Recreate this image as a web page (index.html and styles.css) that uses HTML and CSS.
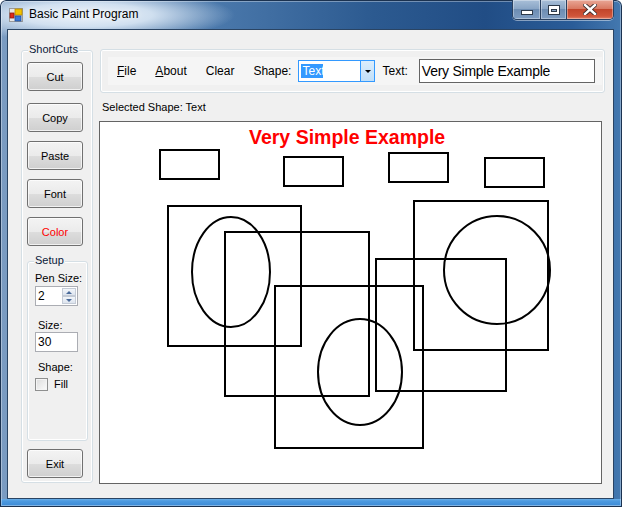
FILE: index.html
```html
<!DOCTYPE html>
<html>
<head>
<meta charset="utf-8">
<title>Basic Paint Program</title>
<link rel="stylesheet" href="styles.css">
</head>
<body>
<div class="window">
  <div class="titlebar">
    <svg class="app-icon" width="14" height="14" viewBox="0 0 14 14">
      <rect x="0.5" y="0.5" width="13" height="13" fill="#e8e8e8" stroke="#9a9a9a"/>
      <line x1="0.5" y1="7" x2="13.5" y2="7" stroke="#b0b0b0"/>
      <line x1="7" y1="0.5" x2="7" y2="13.5" stroke="#b0b0b0"/>
      <rect x="6" y="1" width="7" height="6" fill="#f2c200" stroke="#b88a00" stroke-width="0.8"/>
      <rect x="1" y="5" width="4" height="5" fill="#e02a1a" stroke="#8a1a10" stroke-width="0.8"/>
      <rect x="6" y="8" width="6" height="5" fill="#3a78d8" stroke="#1f4f9a" stroke-width="0.8"/>
    </svg>
    <span class="title">Basic Paint Program</span>
    <div class="caption-btns">
      <div class="cb cb-min"><span class="glyph-min"></span></div>
      <div class="cb cb-max"><span class="glyph-max"></span></div>
      <div class="cb cb-close">
        <svg width="14" height="11" viewBox="0 0 14 11">
          <path d="M2 1 L12 10 M12 1 L2 10" stroke="#3a2a2a" stroke-width="4.2" stroke-linecap="square"/>
          <path d="M2 1 L12 10 M12 1 L2 10" stroke="#ffffff" stroke-width="2.4" stroke-linecap="square"/>
        </svg>
      </div>
    </div>
  </div>
  <div class="client">
    <div class="left">
      <div class="group shortcuts">
        <span class="group-caption">ShortCuts</span>
        <button class="btn btn-first">Cut</button>
        <button class="btn">Copy</button>
        <button class="btn">Paste</button>
        <button class="btn">Font</button>
        <button class="btn btn-red">Color</button>
        <div class="group setup">
          <span class="group-caption">Setup</span>
          <div class="lbl">Pen Size:</div>
          <div class="updown">
            <span class="updown-val">2</span>
            <div class="spin">
              <div class="spin-btn"><span class="arr-up"></span></div>
              <div class="spin-btn"><span class="arr-down"></span></div>
            </div>
          </div>
          <div class="lbl lbl-indent lbl-size">Size:</div>
          <div class="textbox small">30</div>
          <div class="lbl lbl-indent lbl-shape">Shape:</div>
          <div class="check"><span class="check-box"></span><span>Fill</span></div>
        </div>
        <button class="btn btn-exit">Exit</button>
      </div>
    </div>
    <div class="right">
      <div class="group toolbar">
        <div class="strip">
          <span class="menu"><u>F</u>ile</span>
          <span class="menu"><u>A</u>bout</span>
          <span class="menu">Clear</span>
          <span class="menu">Shape:</span>
          <div class="combo">
            <span class="combo-sel">Text</span>
            <span class="combo-drop"><span class="arr-down dark"></span></span>
          </div>
          <span class="menu text-lbl">Text:</span>
          <div class="textbox big">Very Simple Example</div>
        </div>
      </div>
      <div class="status">Selected Shape: Text</div>
      <div class="canvas">
        <svg width="501" height="361" viewBox="0 0 501 361">
          <g fill="none" stroke="#000" stroke-width="2">
            <rect x="60" y="28" width="59" height="29"/>
            <rect x="184" y="35" width="59" height="29"/>
            <rect x="289" y="31" width="59" height="29"/>
            <rect x="385" y="36" width="59" height="29"/>
            <rect x="68" y="84" width="133" height="140"/>
            <ellipse cx="131" cy="150" rx="39" ry="55"/>
            <rect x="125" y="110" width="144" height="164"/>
            <rect x="175" y="164" width="148" height="162"/>
            <ellipse cx="260" cy="250" rx="42" ry="53"/>
            <rect x="276" y="137" width="130" height="132"/>
            <rect x="314" y="79" width="134" height="149"/>
            <ellipse cx="397" cy="148" rx="53" ry="54"/>
          </g>
          <text x="149" y="22" class="canvas-text">Very Simple Example</text>
        </svg>
      </div>
    </div>
  </div>
</div>
</body>
</html>
```
FILE: styles.css
```css
* { box-sizing: border-box; }
html, body { margin: 0; padding: 0; }
body {
  width: 622px;
  height: 507px;
  overflow: hidden;
  background: #ffffff;
  font-family: "Liberation Sans", Arial, sans-serif;
}
.window {
  width: 622px;
  height: 507px;
  border-radius: 6px 6px 0 0;
  background:
    linear-gradient(to top, #1c3d63 0, #1c3d63 1px, #3c8ad5 1px, #4d9ae0 6px, #6aaee6 8px, transparent 8px),
    radial-gradient(ellipse 150px 26px at 85px 15px, rgba(238,244,250,1) 0%, rgba(220,233,246,0.9) 45%, rgba(200,220,240,0) 100%),
    linear-gradient(to right, #7b9cc2 0%, #6b90ba 12%, #4a78ab 35%, #2c5a90 60%, #214d85 78%, #2a5c98 92%, #4479b0 100%);
  box-shadow: inset 0 0 0 1px #1b3250, inset 0 0 0 2px rgba(255,255,255,0.35);
  display: flex;
  flex-direction: column;
}
.titlebar {
  height: 29px;
  display: flex;
  align-items: flex-start;
}
.app-icon {
  margin: 8px 0 0 9px;
  flex: none;
}
.title {
  margin: 7px 0 0 6px;
  font-size: 12px;
  line-height: 15px;
  color: #000;
  text-shadow: 0 0 6px rgba(255,255,255,0.9);
}
.caption-btns {
  margin-left: auto;
  margin-right: 8px;
  display: flex;
  height: 20px;
  border: 1px solid #2a4160;
  border-top: none;
  border-radius: 0 0 5px 5px;
  overflow: hidden;
  box-shadow: 0 1px 0 rgba(255,255,255,0.45);
}
.cb {
  height: 19px;
  display: flex;
  align-items: center;
  justify-content: center;
  background: linear-gradient(#a8bfd8 0%, #8aa6c6 45%, #6d8db3 50%, #7e9dc2 100%);
  box-shadow: inset 0 0 0 1px rgba(255,255,255,0.35);
}
.cb-min { width: 28px; border-right: 1px solid #2a4160; }
.cb-max { width: 26px; border-right: 1px solid #2a4160; }
.cb-close {
  width: 46px;
  background: linear-gradient(#e9a796 0%, #d97a63 45%, #c2452b 50%, #d0553a 85%, #e1826a 100%);
}
.glyph-min {
  width: 12px;
  height: 5px;
  margin-top: 6px;
  background: #fff;
  border: 1px solid #2d3a4a;
}
.glyph-max {
  width: 12px;
  height: 10px;
  border: 1px solid #2d3a4a;
  background: #fff;
  box-shadow: inset 0 0 0 1px #fff;
  position: relative;
}
.glyph-max::after {
  content: "";
  position: absolute;
  left: 2px; top: 3px; right: 2px; bottom: 2px;
  border: 1px solid #2d3a4a;
  background: #8aa6c6;
}
.client {
  margin-left: 7px;
  width: 607px;
  height: 470px;
  border: 1px solid #2a4463;
  background: #f0f0f0;
  display: flex;
  font-size: 11px;
  color: #000;
}
.left {
  padding: 20px 0 0 13px;
  width: 85px;
  flex: none;
}
.group {
  position: relative;
  border: 1px solid #d5dfe5;
  border-radius: 3px;
  box-shadow: inset 0 0 0 1px #ffffff;
}
.group-caption {
  position: absolute;
  left: 6px;
  top: -8px;
  padding: 0 1px;
  line-height: 13px;
  background: #f0f0f0;
  color: #0b1a3a;
}
.shortcuts {
  width: 72px;
  height: 433px;
  padding: 11px 0 0 5px;
}
.btn {
  display: flex;
  align-items: center;
  justify-content: center;
  width: 56px;
  height: 29px;
  margin: 9px 0 0 0;
  padding: 0;
  border: 1px solid #707070;
  border-radius: 3px;
  background: linear-gradient(#f3f3f3 0%, #ebebeb 50%, #dddddd 51%, #cfcfcf 100%);
  box-shadow: inset 0 0 0 1px rgba(255,255,255,0.7);
  font-family: "Liberation Sans", Arial, sans-serif;
  font-size: 11px;
  color: #000;
}
.btn-first { margin-top: 0; }
.btn + .btn:nth-of-type(2) { margin-top: 12px; }
.btn-red { color: #ff0000; }
.setup {
  margin-top: 15px;
  width: 61px;
  height: 180px;
  padding: 10px 0 0 7px;
}
.btn-exit { margin-top: 8px; }
.lbl { line-height: 13px; }
.lbl-indent { padding-left: 3px; }
.updown {
  margin-top: 1px;
  width: 43px;
  height: 20px;
  border: 1px solid #abadb3;
  background: #fff;
  display: flex;
  align-items: stretch;
}
.updown-val {
  flex: 1;
  padding: 2px 0 0 2px;
  font-size: 12px;
}
.spin {
  width: 15px;
  display: flex;
  flex-direction: column;
  padding: 1px 1px 1px 0;
}
.spin-btn {
  flex: 1;
  display: flex;
  align-items: center;
  justify-content: center;
  border: 1px solid #c4cbd6;
  background: linear-gradient(#f3f6fa, #dde4ee);
}
.arr-up {
  width: 0; height: 0;
  border-left: 3px solid transparent;
  border-right: 3px solid transparent;
  border-bottom: 3px solid #4a6a9a;
}
.arr-down {
  width: 0; height: 0;
  border-left: 3px solid transparent;
  border-right: 3px solid transparent;
  border-top: 3px solid #4a6a9a;
}
.arr-down.dark { border-top-color: #000; }
.lbl-size { margin-top: 13px; }
.textbox {
  background: #fff;
  border: 1px solid #abadb3;
}
.textbox.small {
  width: 43px;
  height: 20px;
  padding: 2px 0 0 2px;
  font-size: 12px;
  line-height: 15px;
}
.lbl-shape { margin-top: 9px; }
.check {
  margin-top: 4px;
  display: flex;
  align-items: center;
  gap: 6px;
  line-height: 13px;
}
.check-box {
  width: 13px;
  height: 13px;
  border: 1px solid #8e8f8f;
  background: linear-gradient(135deg, #dcdcdc, #fbfbfb);
  box-shadow: inset 0 0 0 1px #f4f4f4;
}
.right {
  margin-left: 6px;
  width: 506px;
  flex: none;
  padding-top: 19px;
}
.toolbar {
  margin-left: 1px;
  width: 505px;
  height: 44px;
  padding: 7px 2px 0 7px;
}
.strip {
  height: 28px;
  display: flex;
  align-items: center;
  background: #f5f5f5;
  padding-left: 9px;
  font-size: 12px;
}
.menu {
  margin-right: 19px;
  line-height: 15px;
}
.menu:nth-child(4) { margin-right: 7px; }
.combo {
  width: 77px;
  height: 22px;
  border: 1px solid #3399ff;
  background: #fff;
  display: flex;
  align-items: center;
  margin-right: 7px;
}
.combo-sel {
  margin-left: 2px;
  padding: 0 1px;
  background: #3399ff;
  color: #fff;
  line-height: 14px;
  width: 22px;
}
.combo-drop {
  margin-left: auto;
  width: 14px;
  height: 20px;
  border-left: 1px solid #3399ff;
  background: linear-gradient(#dcedfc, #c1dff8);
  display: flex;
  align-items: center;
  justify-content: center;
}
.text-lbl { margin-right: 11px; }
.textbox.big {
  width: 176px;
  height: 24px;
  border-color: #646464;
  font-size: 14px;
  letter-spacing: -0.25px;
  line-height: 20px;
  padding: 1px 0 0 2px;
}
.status {
  margin-top: 8px;
  padding-left: 3px;
  line-height: 13px;
}
.canvas {
  margin-top: 7px;
  width: 503px;
  height: 363px;
  border: 1px solid #646464;
  background: #fff;
}
.canvas svg { display: block; }
.canvas-text {
  font-family: "Liberation Sans", Arial, sans-serif;
  font-weight: bold;
  font-size: 19.5px;
  fill: #ff0000;
}
```
